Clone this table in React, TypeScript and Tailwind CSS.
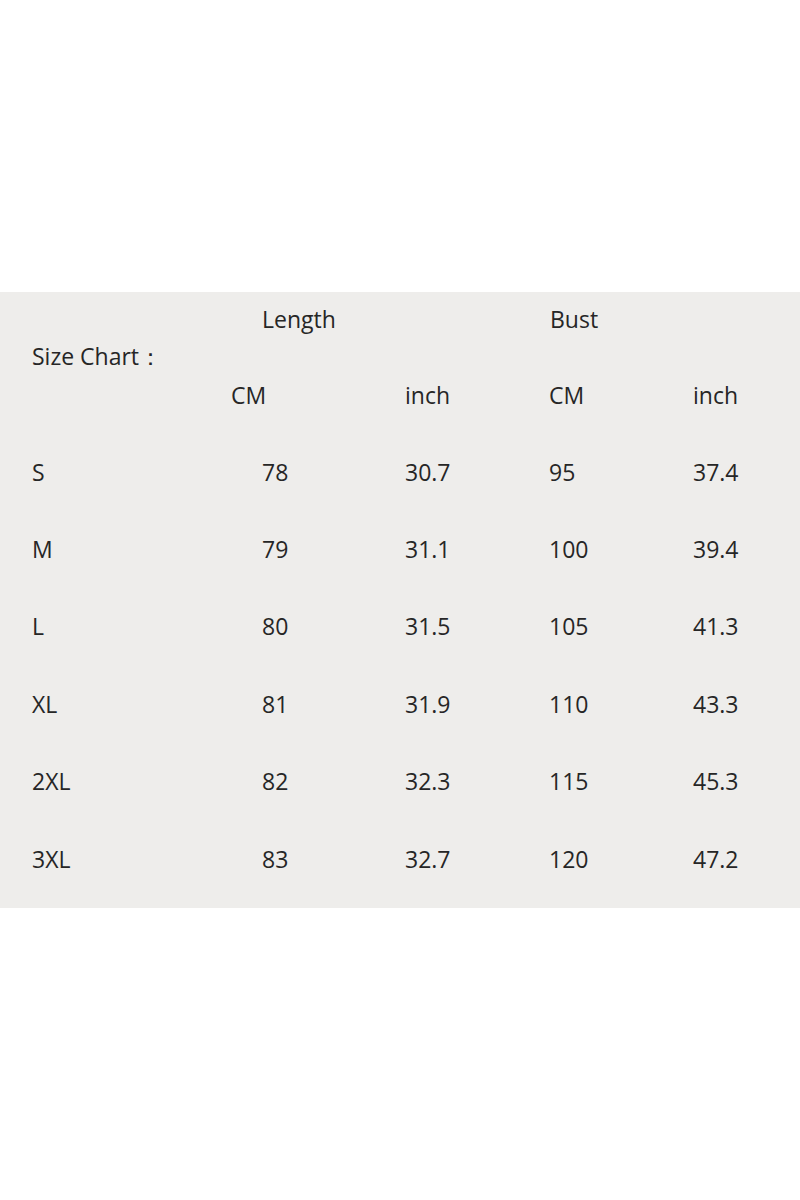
import React from "react";

const rows = [
  ["S", "78", "30.7", "95", "37.4"],
  ["M", "79", "31.1", "100", "39.4"],
  ["L", "80", "31.5", "105", "41.3"],
  ["XL", "81", "31.9", "110", "43.3"],
  ["2XL", "82", "32.3", "115", "45.3"],
  ["3XL", "83", "32.7", "120", "47.2"],
];

export default function App() {
  return (
    <div
      className="w-[800px] h-[1200px] bg-white text-[#262626] text-[23px] leading-[30px]"
      style={{ fontFamily: '"Open Sans", "Noto Sans", sans-serif' }}
    >
      <div className="h-[292px]" />
      <div className="bg-[#eeedeb] h-[616px] flex flex-col">
        <div className="grid grid-cols-[231px_174px_144px_144px_1fr] grid-rows-[53px_88px]">
          <div className="row-span-2 flex items-start pt-[49px] pl-[32px]">Size Chart：</div>
          <div className="flex items-center pl-[31px]">Length</div>
          <div />
          <div className="flex items-center pl-[1px]">Bust</div>
          <div />
          <div className="flex items-start pt-[35px]">CM</div>
          <div className="flex items-start pt-[35px]">inch</div>
          <div className="flex items-start pt-[35px]">CM</div>
          <div className="flex items-start pt-[35px]">inch</div>
        </div>
        {rows.map((r) => (
          <div key={r[0]} className="grid grid-cols-[231px_174px_144px_144px_1fr] h-[77.4px] items-center">
            <div className="pl-[32px]">{r[0]}</div>
            <div className="pl-[31px]">{r[1]}</div>
            <div>{r[2]}</div>
            <div>{r[3]}</div>
            <div>{r[4]}</div>
          </div>
        ))}
      </div>
    </div>
  );
}
